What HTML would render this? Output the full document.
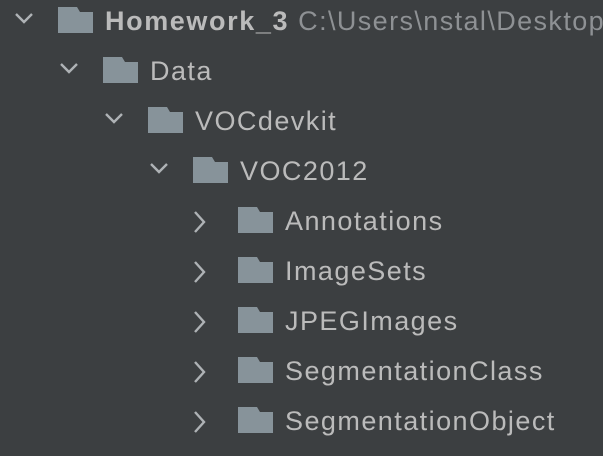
<!DOCTYPE html>
<html><head><style>
body{margin:0;width:603px;height:456px;background:#3c3f41;overflow:hidden;font-family:"Liberation Sans",sans-serif;}
.r{position:absolute;height:50px;left:0;width:603px;}
.r svg{position:absolute;}
.t{position:absolute;top:6px;font-size:27px;color:#bbbbbb;white-space:nowrap;letter-spacing:1.45px}
</style></head><body>
<div id="c"></div>
<script>
var rows=[["Homework_3",0,1],["Data",1,1],["VOCdevkit",2,1],["VOC2012",3,1],["Annotations",4,0],["ImageSets",4,0],["JPEGImages",4,0],["SegmentationClass",4,0],["SegmentationObject",4,0]];
var h="";
rows.forEach(function(r,i){
 var x=r[1]*45, y=i*50;
 var chev=r[2]?'<svg style="left:'+(x+14)+'px;top:12px" width="20" height="14"><path d="M2 2 L10 10 L18 2" stroke="#aeb2b5" stroke-width="2.4" fill="none"/></svg>'
  :'<svg style="left:'+(x+12)+'px;top:9px" width="16" height="26"><path d="M3 3 L12 13 L3 23" stroke="#aeb2b5" stroke-width="2.4" fill="none"/></svg>';
 var fold='<svg style="left:'+(x+58)+'px;top:7px" width="36" height="27"><path d="M0 0 H19 L22 5 H35 V26 H0 Z" fill="#87939a"/></svg>';
 var txt=i==0?'<div class="t" style="left:105px;font-weight:bold;letter-spacing:1.6px">Homework_3 <span style="font-weight:normal;color:#8e9194;letter-spacing:1.4px">C:\\Users\\nstal\\Desktop</span></div>'
  :'<div class="t" style="left:'+(x+105)+'px">'+r[0]+'</div>';
 h+='<div class="r" style="top:'+y+'px">'+chev+fold+txt+'</div>';
});
document.getElementById("c").innerHTML=h;
</script>
</body></html>
